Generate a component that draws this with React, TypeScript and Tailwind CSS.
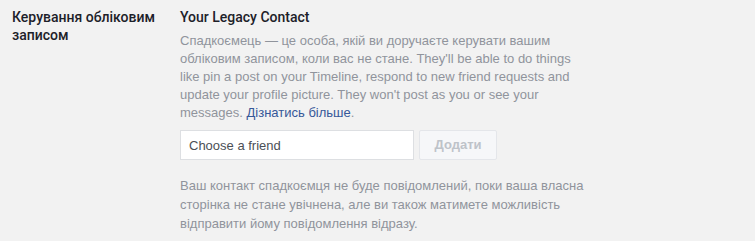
import React from "react";

const font = { fontFamily: '"Liberation Sans", Arial, sans-serif' };
const headFont = { fontFamily: 'Roboto, "Liberation Sans", Arial, sans-serif' };

export default function App() {
  return (
    <div
      className="flex min-h-[241px] w-[755px] bg-[#f2f2f2] pt-[8px] text-[13px] antialiased"
      style={font}
    >
      <div
        className="w-[180px] shrink-0 pl-[12px] pr-[20px] text-[14px] font-medium leading-[18px] text-[#1d2129]"
        style={headFont}
      >
        Керування обліковим записом
      </div>
      <div className="w-[405px] shrink-0">
        <h2 className="text-[14px] font-medium leading-[18px] text-[#1d2129]" style={headFont}>
          Your Legacy Contact
        </h2>
        <p className="mt-[6px] text-[13px] leading-[18px] text-[#90949c]">
          Спадкоємець — це особа, якій ви доручаєте керувати вашим обліковим записом, коли вас не
          стане. They'll be able to do things like pin a post on your Timeline, respond to new friend
          requests and update your profile picture. They won't post as you or see your messages.{" "}
          <a className="text-[#365899]" href="#">
            Дізнатись більше
          </a>
          .
        </p>
        <div className="mt-[8px] flex gap-[5px]">
          <input
            className="h-[30px] w-[234px] border border-[#dddfe2] bg-white px-[8px] text-[13px] text-[#1d2129] outline-none placeholder:text-[#4b4f56]"
            placeholder="Choose a friend"
            style={font}
          />
          <button
            disabled
            className="h-[30px] w-[78px] rounded-[2px] border border-[#e4e6ea] bg-[#f6f7f9] text-[13px] font-bold text-[#bec3c9]"
            style={font}
          >
            Додати
          </button>
        </div>
        <p className="mt-[16px] text-[13px] leading-[19px] text-[#90949c]">
          Ваш контакт спадкоємця не буде повідомлений, поки ваша власна сторінка не стане увічнена,
          але ви також матимете можливість відправити йому повідомлення відразу.
        </p>
      </div>
    </div>
  );
}
